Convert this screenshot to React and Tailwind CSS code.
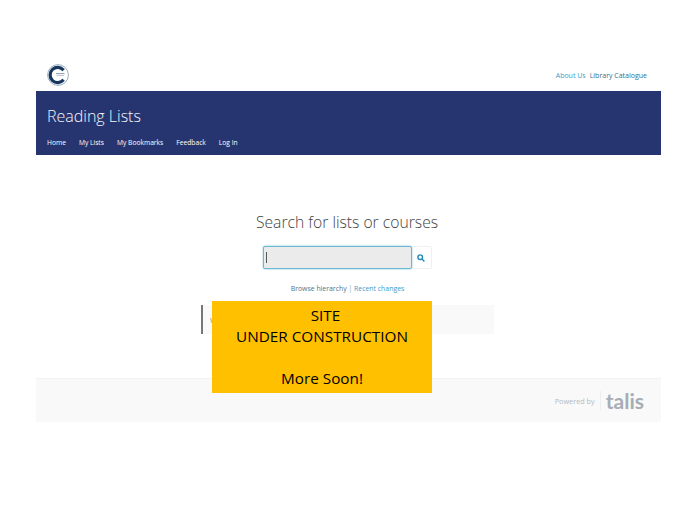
export default function App() {
  const navLinks = ["Home", "My Lists", "My Bookmarks", "Feedback", "Log In"];

  return (
    <div className="relative w-[700px] h-[525px] bg-white overflow-hidden font-['Open_Sans',sans-serif]">
      <div className="pt-[60px] pl-9 w-[661px]">
        {/* Top bar */}
        <div className="flex items-center justify-between h-[31px] pl-[11px] pr-[14px]">
          <svg width="22" height="24" viewBox="0 0 22 24" className="mt-[-2px]">
            <circle cx="11" cy="12" r="10.4" fill="white" stroke="#6f8ba5" strokeWidth="0.7" />
            <path d="M16.6 7.2A7.6 7.6 0 1 0 16.6 16.8" fill="none" stroke="#17375e" strokeWidth="3.2" />
            <rect x="9" y="10.2" width="8.5" height="0.9" fill="#7f8c9c" />
            <rect x="9.5" y="12.2" width="7.5" height="0.8" fill="#b4bcc8" />
          </svg>
          <div className="flex gap-1 text-[7px] leading-none mt-[-1px]">
            <a className="text-[#3d9cc9]">About Us</a>
            <a className="text-[#2f6f8d]">Library Catalogue</a>
          </div>
        </div>

        {/* Banner */}
        <div className="h-[64px] bg-[#26356f] pl-[11px] pt-[13px]">
          <h1 className="text-[16px] leading-[24px] font-light text-[#f6f7fa]">Reading Lists</h1>
          <nav className="flex gap-[13px] mt-[9px] text-[6.7px] leading-[11px] text-white">
            {navLinks.map((link) => (
              <a key={link}>{link}</a>
            ))}
          </nav>
        </div>

        {/* Search */}
        <div className="flex flex-col items-center pt-[56px]">
          <h2 className="text-[15.7px] leading-[22px] font-light text-[#3f3f3f] ml-[-3px]">
            Search for lists or courses
          </h2>
          <div className="flex mt-[13px] ml-[-3px]">
            <div className="flex items-center w-[149px] h-[23px] bg-[#ebebeb] border border-[#6cb8d4] rounded-[2px] pl-[2px] shadow-[0_0_2px_#6cb8d4]">
              <span className="w-px h-[11px] bg-[#555555]" />
            </div>
            <div className="flex items-center justify-center w-[20px] h-[23px] border border-l-0 border-[#f0f0f0] rounded-r-[2px]">
              <svg width="8" height="8" viewBox="0 0 8 8" fill="none" stroke="#1d8ab8" strokeWidth="1.4">
                <circle cx="3.2" cy="3.2" r="2.3" />
                <path d="M5 5l2.4 2.4" />
              </svg>
            </div>
          </div>
          <div className="mt-[14px] ml-[-2px] text-[6.9px] leading-[11px] text-[#56707f]">
            Browse hierarchy <span className="text-[#88aaaa]">|</span>{" "}
            <span className="text-[#3d9cc9]">Recent changes</span>
          </div>
        </div>

        {/* Notice behind the overlay */}
        <div className="flex items-center ml-[165px] mt-[11px] w-[293px] h-[29px] bg-[#f9f9f9] border-l-2 border-[#777777] pl-[7px] text-[8px] text-[#888888]">
          W
        </div>

        {/* Footer */}
        <div className="flex items-center justify-end mt-[44px] h-[44px] bg-[#f9f9f9] border-t border-[#f1f1f1] pr-[17px]">
          <span className="text-[7.3px] text-[#b5bac0] mt-[1px]">Powered by</span>
          <span className="ml-[5px] h-[20px] border-l border-[#eeeeee]" />
          <span className="ml-[5px] font-['Lato',sans-serif] font-bold text-[21px] leading-none text-[#a7adb5]">talis</span>
        </div>
      </div>

      {/* Under construction overlay */}
      <div className="absolute left-[212px] top-[301px] w-[220px] h-[92px] bg-[#ffc000] text-center text-[15.3px] leading-[21px] text-black pt-[4px]">
        <p className="ml-[7px]">SITE</p>
        <p>UNDER CONSTRUCTION</p>
        <p>&nbsp;</p>
        <p>More Soon!</p>
      </div>
    </div>
  );
}
